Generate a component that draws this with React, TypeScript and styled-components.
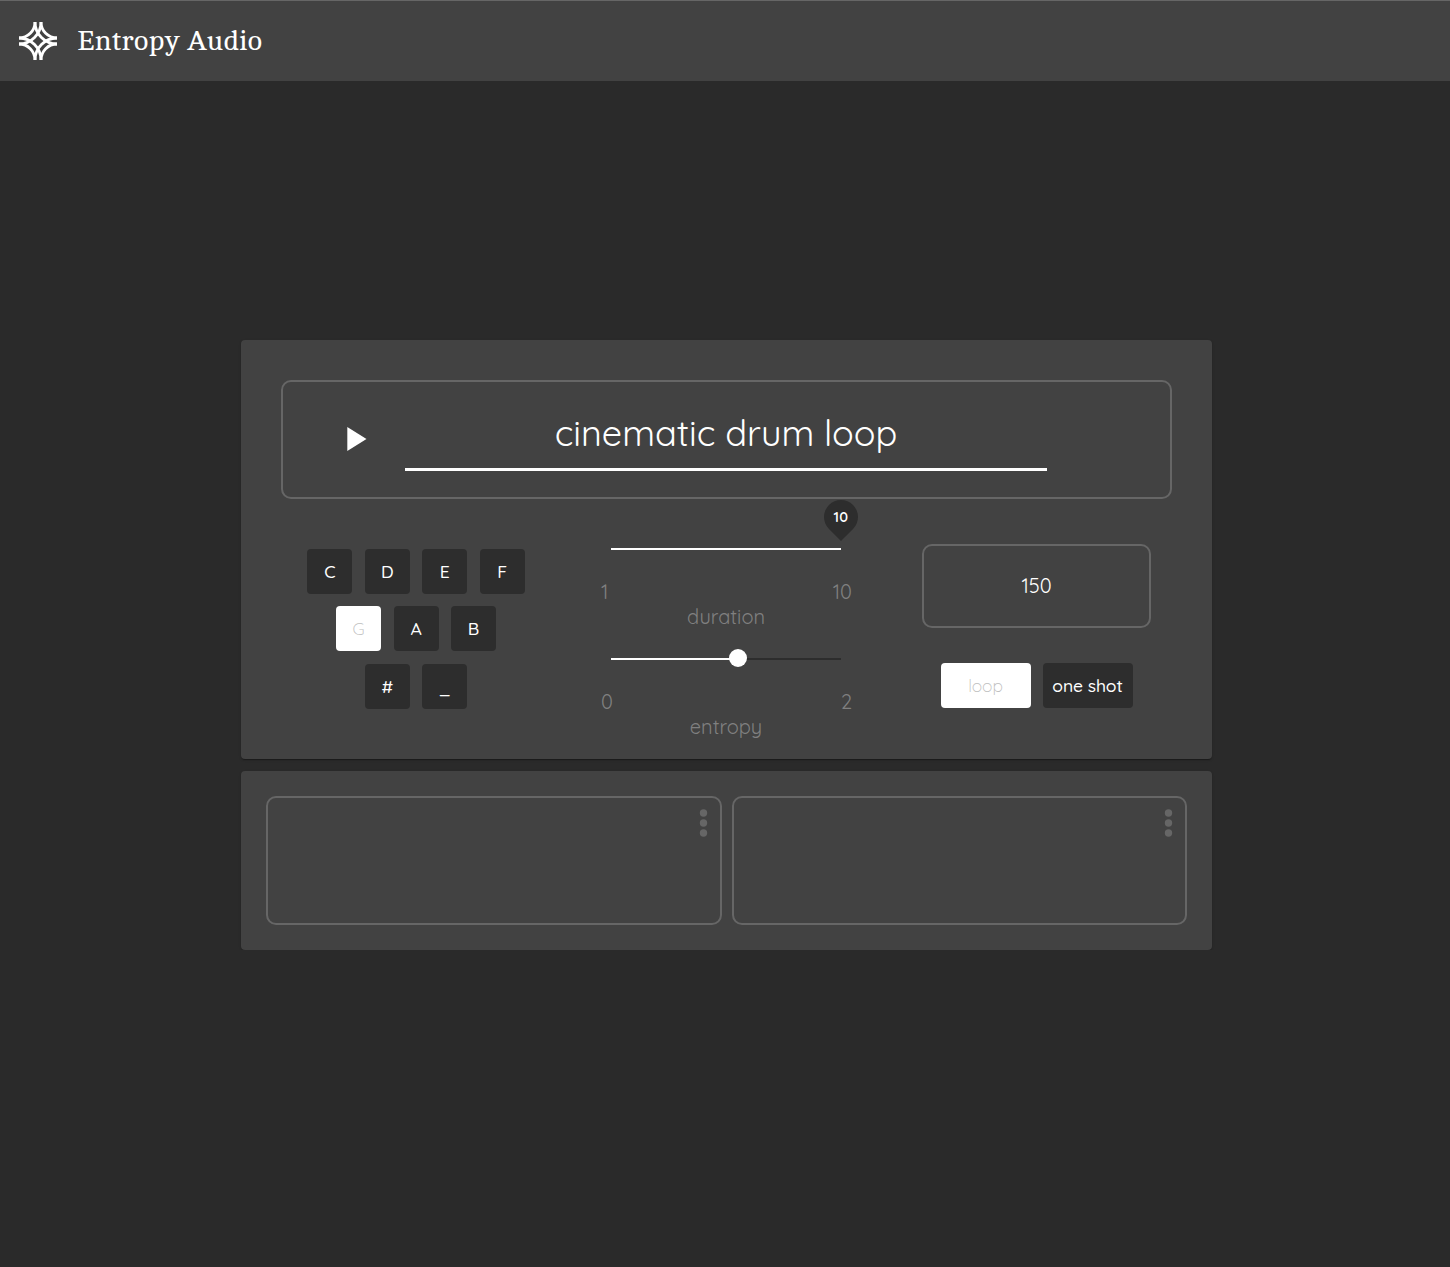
import React from "react";
import styled, { createGlobalStyle, css } from "styled-components";

const GlobalStyle = createGlobalStyle`
  * { box-sizing: border-box; }
  body {
    margin: 0;
    background: #2a2a2a;
    color: #fff;
    font-family: Quicksand, Lato, "Liberation Sans", sans-serif;
    font-weight: 430;
  }
`;

const Header = styled.header`
  display: flex;
  align-items: center;
  gap: 20px;
  height: 81px;
  padding: 0 19px;
  border-top: 1px solid #666;
  background: #424242;
`;

const Brand = styled.h1`
  margin: 0;
  font: 400 28px/38px Cambo, "DejaVu Serif", serif;
  letter-spacing: 0.05px;
`;

const Main = styled.main`
  display: flex;
  flex-direction: column;
  gap: 12px;
  width: 971px;
  margin: 259px 0 0 241px;
`;

const Panel = styled.section`
  border-radius: 4px;
  background: #424242;
  box-shadow: 0 2px 1px -1px rgba(0, 0, 0, 0.2), 0 1px 1px rgba(0, 0, 0, 0.14),
    0 1px 3px rgba(0, 0, 0, 0.12);
`;

const Generator = styled(Panel)`
  height: 419px;
  padding: 40px 40px 0;
`;

const outline = css`
  border: 2px solid #666;
  border-radius: 10px;
`;

const PromptBox = styled.div`
  ${outline}
  display: flex;
  height: 119px;
  padding: 0 0 0 64px;
`;

const PlayButton = styled.button`
  width: 20px;
  height: 24px;
  margin: 45px 38px 0 0;
  padding: 0;
  border: 0;
  background: none;
  svg { display: block; }
`;

const PromptField = styled.div`
  width: 642px;
  height: 89px;
  border-bottom: 3px solid #fff;
  padding-top: 28px;
  text-align: center;
  font-size: 36px;
  line-height: 46px;
`;

const Controls = styled.div`
  display: grid;
  grid-template-columns: 230px 230px 229px;
  column-gap: 80px;
  padding-left: 20px;
`;

const Keys = styled.div`
  display: flex;
  flex-direction: column;
  gap: 12.4px;
  padding-top: 50px;
`;

const KeyRow = styled.div`
  display: flex;
  justify-content: center;
  gap: 12.5px;
`;

const Toggle = styled.button<{ $active?: boolean; $wide?: boolean }>`
  width: ${(p) => (p.$wide ? 90 : 45)}px;
  height: 45px;
  padding: 0;
  border: 0;
  border-radius: 4px;
  background: ${(p) => (p.$active ? "#fff" : "#2d2d2d")};
  color: ${(p) => (p.$active ? "#bdbdbd" : "#fff")};
  font-family: inherit;
  font-weight: ${(p) => (p.$active ? 350 : 470)};
  font-size: 17.5px;
  letter-spacing: -0.1px;
  line-height: 45px;
  white-space: nowrap;
`;

const Sliders = styled.div`
  padding-top: 49px;
`;

const Slider = styled.div`
  height: 110px;
`;

const Track = styled.div`
  position: relative;
  height: 2px;
  background: #2d2d2d;
`;

const Fill = styled.div`
  height: 2px;
  background: #fff;
`;

const Thumb = styled.span`
  position: absolute;
  top: -9px;
  width: 18px;
  height: 18px;
  margin-left: -8.5px;
  border-radius: 50%;
  background: #fff;
`;

const Pin = styled.span`
  position: absolute;
  top: -48px;
  width: 34px;
  height: 34px;
  margin-left: -17px;
  border-radius: 50% 50% 0 50%;
  background: #2d2d2d;
  transform: rotate(45deg);
  span {
    display: block;
    transform: rotate(-45deg);
    font-size: 14.5px;
    font-weight: 600;
    letter-spacing: 0.2px;
    line-height: 34px;
    text-align: center;
  }
`;

const Range = styled.div`
  display: flex;
  justify-content: space-between;
  margin: 29px -11px 0 -10px;
  color: #808080;
  font-size: 20px;
  line-height: 25px;
`;

const SliderName = styled.div`
  color: #808080;
  font-size: 20px;
  line-height: 25px;
  text-align: center;
`;

const Settings = styled.div`
  padding-top: 45px;
  margin-left: 1px;
  width: 229px;
`;

const Tempo = styled.div`
  ${outline}
  height: 84px;
  font-size: 20px;
  line-height: 80px;
  text-align: center;
`;

const Modes = styled.div`
  display: flex;
  justify-content: center;
  gap: 12px;
  margin-top: 35px;
`;

const Results = styled(Panel)`
  display: grid;
  grid-template-columns: 1fr 1fr;
  gap: 10px;
  height: 179px;
  padding: 25px;
`;

const Clip = styled.article`
  ${outline}
  display: flex;
  justify-content: flex-end;
  padding: 11px 12px;
`;

const MenuButton = styled.button`
  height: 28px;
  padding: 0;
  border: 0;
  background: none;
  svg { display: block; }
`;

const Logo = () => (
  <svg width="38" height="38" viewBox="0 0 38 38" fill="none" stroke="#fff" strokeWidth="2.8">
    {[0, 90, 180, 270].map((a) => (
      <path
        key={a}
        transform={`rotate(${a} 19 19)`}
        d="M16 0A16 16 0 0 1 0 16M22 0A22 22 0 0 1 0 22"
      />
    ))}
  </svg>
);

const Dots = () => (
  <svg width="9" height="28" viewBox="0 0 9 28" fill="#666">
    {[4, 14, 24].map((y) => <circle key={y} cx="4.5" cy={y} r="3.7" />)}
  </svg>
);

const Scale = ({ min, max, name, value }: { min: number; max: number; name: string; value: number }) => {
  const left = `${((value - min) / (max - min)) * 100}%`;
  return (
    <Slider>
      <Track>
        <Fill style={{ width: left }} />
        {value === max ? (
          <Pin style={{ left }}><span>{value}</span></Pin>
        ) : (
          <Thumb style={{ left }} />
        )}
      </Track>
      <Range><span>{min}</span><span>{max}</span></Range>
      <SliderName>{name}</SliderName>
    </Slider>
  );
};

const noteRows = [["C", "D", "E", "F"], ["G", "A", "B"], ["#", "_"]];

export default function App() {
  return (
    <>
      <GlobalStyle />
      <Header>
        <Logo />
        <Brand>Entropy Audio</Brand>
      </Header>
      <Main>
        <Generator>
          <PromptBox>
            <PlayButton aria-label="Play">
              <svg width="20" height="24" viewBox="0 0 20 24"><path d="M0.3 0L19.5 12L0.3 24Z" fill="#fff" /></svg>
            </PlayButton>
            <PromptField>cinematic drum loop</PromptField>
          </PromptBox>
          <Controls>
            <Keys>
              {noteRows.map((row) => (
                <KeyRow key={row[0]}>
                  {row.map((n) => <Toggle key={n} $active={n === "G"}>{n}</Toggle>)}
                </KeyRow>
              ))}
            </Keys>
            <Sliders>
              <Scale min={1} max={10} value={10} name="duration" />
              <Scale min={0} max={2} value={1.1} name="entropy" />
            </Sliders>
            <Settings>
              <Tempo>150</Tempo>
              <Modes>
                <Toggle $wide $active>loop</Toggle>
                <Toggle $wide>one shot</Toggle>
              </Modes>
            </Settings>
          </Controls>
        </Generator>
        <Results>
          {[0, 1].map((i) => (
            <Clip key={i}>
              <MenuButton aria-label="Clip menu"><Dots /></MenuButton>
            </Clip>
          ))}
        </Results>
      </Main>
    </>
  );
}
